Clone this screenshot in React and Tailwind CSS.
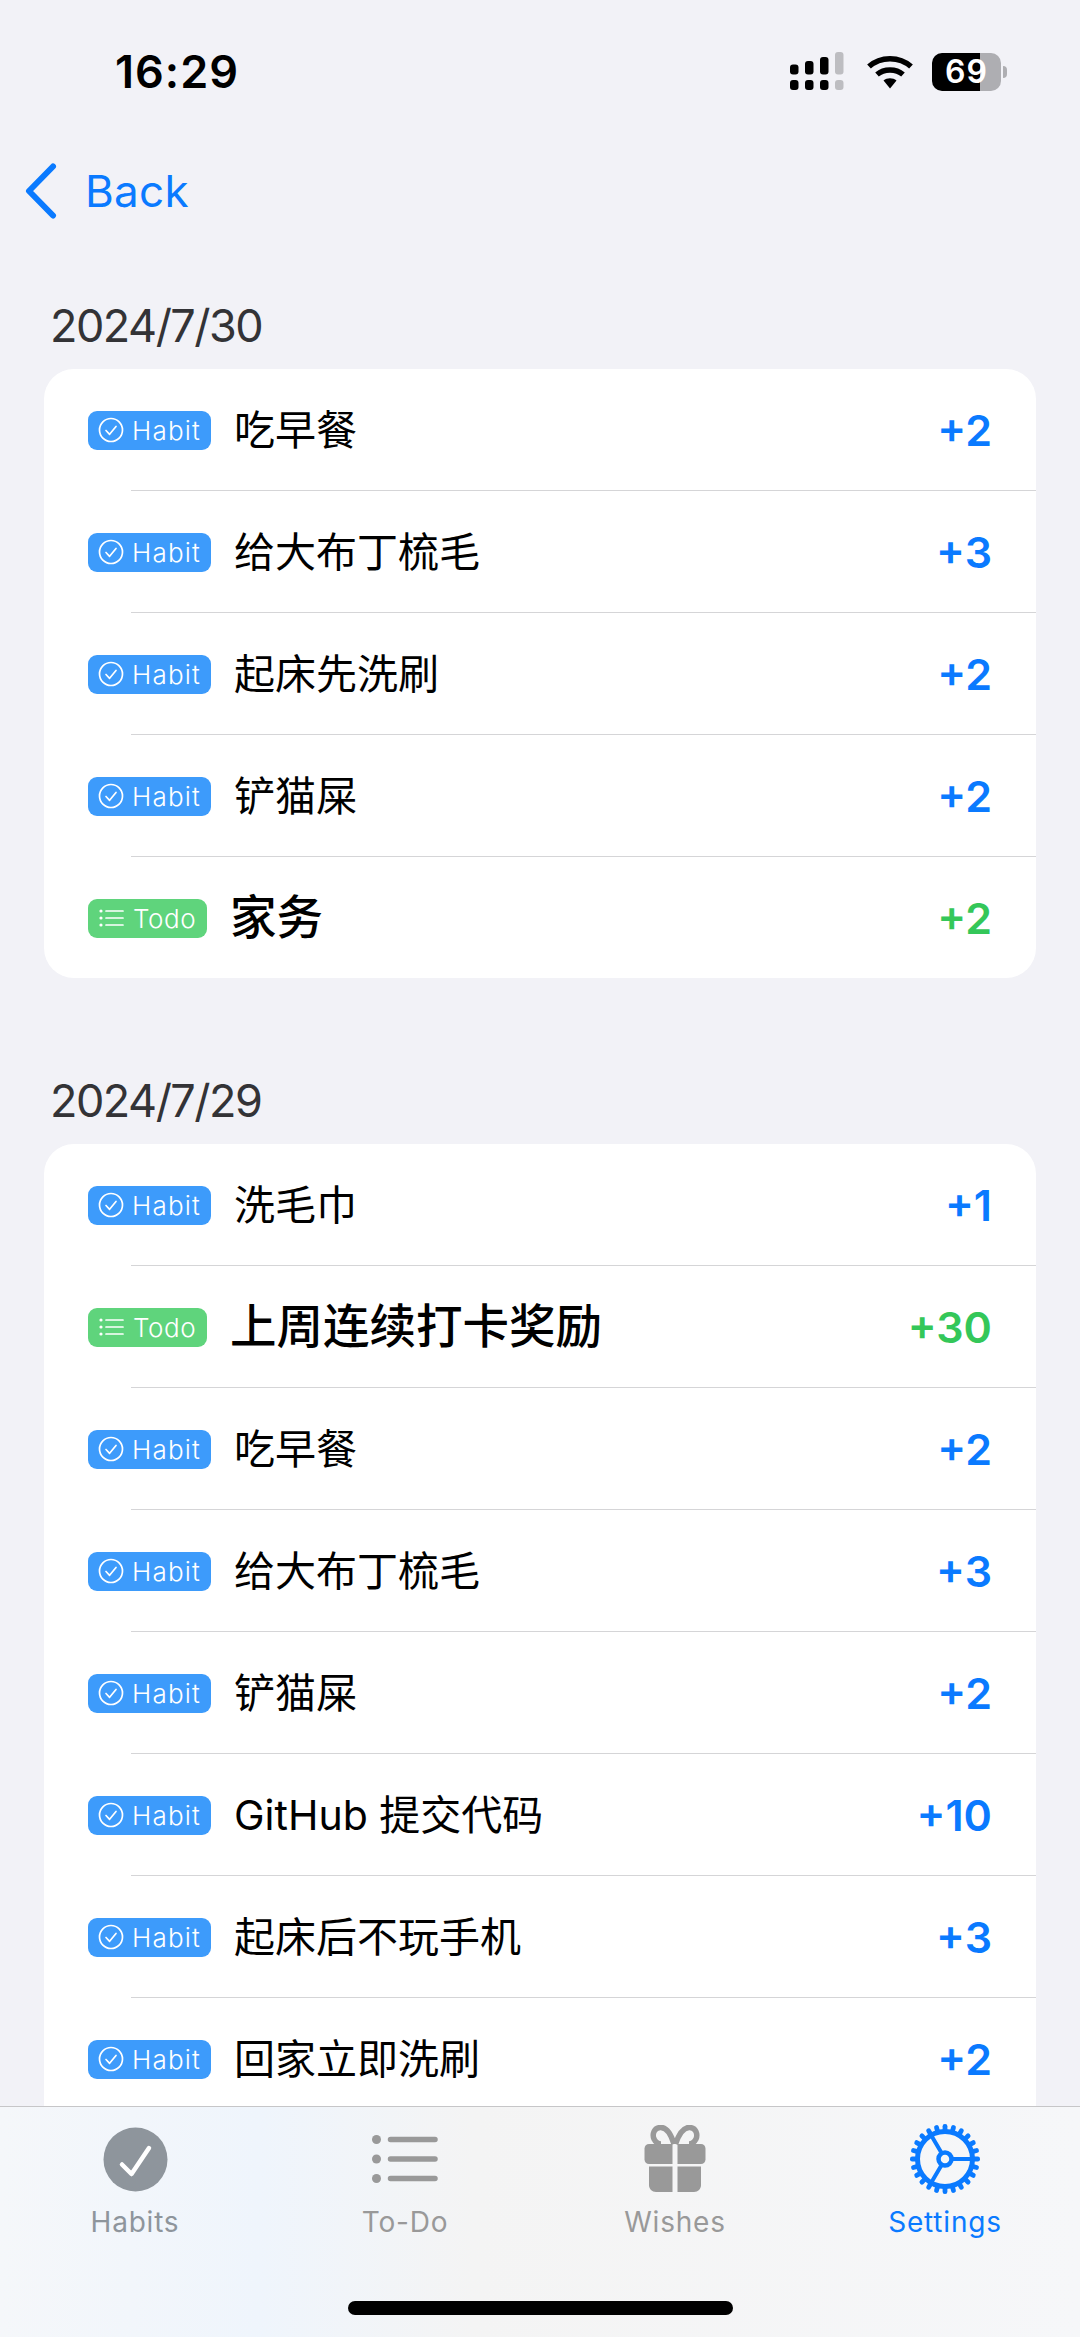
const CJK = "font-['Inter','Noto_Sans_CJK_SC',sans-serif]";

const firstDay = [
  { type: "habit", title: "吃早餐", points: 2 },
  { type: "habit", title: "给大布丁梳毛", points: 3 },
  { type: "habit", title: "起床先洗刷", points: 2 },
  { type: "habit", title: "铲猫屎", points: 2 },
  { type: "todo", title: "家务", points: 2 },
];

const secondDay = [
  { type: "habit", title: "洗毛巾", points: 1 },
  { type: "todo", title: "上周连续打卡奖励", points: 30 },
  { type: "habit", title: "吃早餐", points: 2 },
  { type: "habit", title: "给大布丁梳毛", points: 3 },
  { type: "habit", title: "铲猫屎", points: 2 },
  { type: "habit", title: "GitHub 提交代码", points: 10 },
  { type: "habit", title: "起床后不玩手机", points: 3 },
  { type: "habit", title: "回家立即洗刷", points: 2 },
  { type: "habit", title: "看书", points: 2 },
];

function SignalIcon() {
  return (
    <svg width="56" height="40" viewBox="0 0 56 40" className="block">
      <rect x="0" y="12.5" width="8.5" height="10" rx="3" fill="#000" />
      <rect x="15" y="9" width="8.5" height="13.5" rx="3" fill="#000" />
      <rect x="30" y="5" width="8.5" height="17.5" rx="3" fill="#000" />
      <rect x="45" y="0" width="8.5" height="22.5" rx="3" fill="#bdbdc1" />
      <rect x="0" y="28" width="8.5" height="10" rx="3" fill="#000" />
      <rect x="15" y="28" width="8.5" height="10" rx="3" fill="#000" />
      <rect x="30" y="28" width="8.5" height="10" rx="3" fill="#000" />
      <rect x="45" y="28" width="8.5" height="10" rx="3" fill="#bdbdc1" />
    </svg>
  );
}

function WifiIcon() {
  return (
    <svg width="46" height="34" viewBox="0 0 46 34" className="block">
      <path d="M2 11.5C13.5 1 32.5 1 44 11.5" fill="none" stroke="#000" strokeWidth="5.5" strokeLinecap="butt" />
      <path d="M10 19.5C17 13.5 29 13.5 36 19.5" fill="none" stroke="#000" strokeWidth="5.5" strokeLinecap="butt" />
      <path d="M16.5 25.5C20 22.5 26 22.5 29.5 25.5L23 33.5Z" fill="#000" />
    </svg>
  );
}

function HabitMark() {
  return (
    <svg width="26" height="26" viewBox="0 0 26 26" className="block shrink-0">
      <circle cx="13" cy="13" r="11.5" fill="none" stroke="#fff" strokeWidth="1.7" />
      <path d="M8 13.5l3.6 3.8L18 9.5" fill="none" stroke="#fff" strokeWidth="1.7" strokeLinecap="round" strokeLinejoin="round" />
    </svg>
  );
}

function TodoMark() {
  return (
    <svg width="26" height="22" viewBox="0 0 26 22" className="block shrink-0">
      <circle cx="2" cy="4" r="1.6" fill="#fff" />
      <circle cx="2" cy="11" r="1.6" fill="#fff" />
      <circle cx="2" cy="18" r="1.6" fill="#fff" />
      <path d="M7 4h17M7 11h17M7 18h17" stroke="#fff" strokeWidth="1.7" strokeLinecap="round" />
    </svg>
  );
}

function Badge({ type }) {
  if (type === "todo") {
    return (
      <div className="flex h-[39px] w-[119px] shrink-0 items-center gap-[8px] rounded-[9px] bg-[#5fd47c] pl-[11px] text-[26px] font-light tracking-[0.6px] text-white">
        <TodoMark />
        <span>Todo</span>
      </div>
    );
  }
  return (
    <div className="flex h-[39px] w-[123px] shrink-0 items-center gap-[8px] rounded-[9px] bg-[#3d9bfb] pl-[10px] text-[26px] font-light tracking-[1.2px] text-white">
      <HabitMark />
      <span>Habit</span>
    </div>
  );
}

function Row({ item }) {
  const isTodo = item.type === "todo";
  return (
    <div className="flex h-[121px] items-center pl-[44px] pr-[44px] pt-[1px]">
      <Badge type={item.type} />
      {isTodo ? (
        <span className="ml-[23px] text-[46.5px] font-medium text-black">{item.title}</span>
      ) : (
        <span className="ml-[23px] pt-[2px] text-[41px] text-black">{item.title}</span>
      )}
      {isTodo ? (
        <span className="ml-auto text-[43px] font-semibold text-[#34c759]">+{item.points}</span>
      ) : (
        <span className="ml-auto text-[43px] font-semibold text-[#0a7aff]">+{item.points}</span>
      )}
    </div>
  );
}

function Day({ date, items, className }) {
  return (
    <section className={className}>
      <h2 className="mb-[13px] ml-[50px] h-[60px] text-[45px] leading-[60px] font-normal tracking-[-1.5px] text-[#333336]">{date}</h2>
      <div className="mx-[44px] overflow-hidden rounded-[30px] bg-white">
        {items.map((item, i) => (
          <div key={i}>
            {i > 0 && <div className="ml-[87px] h-px bg-[#d5d5d7]" />}
            <Row item={item} />
          </div>
        ))}
      </div>
    </section>
  );
}

function GearIcon() {
  const teeth = Array.from({ length: 24 }, (_, i) => i * 15);
  return (
    <svg width="72" height="72" viewBox="-36 -36 72 72" className="block">
      {teeth.map((deg) => (
        <rect key={deg} x="-2.400" y="-35" width="4.800" height="8" rx="2.200" fill="#0a7aff" transform={`rotate(${deg})`} />
      ))}
      <circle r="27.5" fill="none" stroke="#0a7aff" strokeWidth="5" />
      <circle r="6.5" fill="none" stroke="#0a7aff" strokeWidth="4.5" />
      <path d="M8 0H27M-4 -7L-14 -24M-4 7L-14 24" stroke="#0a7aff" strokeWidth="4" />
    </svg>
  );
}

function GiftIcon() {
  return (
    <svg width="62" height="68" viewBox="0 0 62 68" className="block">
      <path d="M30 19C26 6 21 2 16 2.500C10 3 8 9 10 14C11.500 17 14 19 17 19M31.500 19C36 6 41 2 46 2.500C52 3 54 9 52 14C50.500 17 48 19 45 19" fill="none" stroke="#999" strokeWidth="5.500" />
      <path d="M5 19H28.500V39H5C2.500 39 0.500 37 0.500 34.500V23.500C0.500 21 2.500 19 5 19Z" fill="#999" />
      <path d="M33.500 19H57C59.500 19 61.500 21 61.500 23.500V34.500C61.500 37 59.500 39 57 39H33.500Z" fill="#999" />
      <path d="M5 41.500H28.500V67H12C8 67 5 64 5 60Z" fill="#999" />
      <path d="M33.500 41.500H57V60C57 64 54 67 50 67H33.500Z" fill="#999" />
    </svg>
  );
}

function Tab({ label, color, children }) {
  return (
    <div className="flex flex-col items-center">
      <div className="flex h-[72px] w-[72px] items-center justify-center">{children}</div>
      <span className={`mt-[10px] text-[28px] leading-[34px] tracking-[0.8px] ${color}`}>{label}</span>
    </div>
  );
}

export default function App() {
  return (
    <div className={`relative h-[2337px] w-[1080px] overflow-hidden bg-[#f2f2f7] ${CJK}`}>
      <div className="flex h-[144px] items-center justify-between pl-[115px] pr-[73px]">
        <span className="text-[45px] font-semibold tracking-[1px] text-black">16:29</span>
        <div className="flex items-center">
          <SignalIcon />
          <div className="ml-[21px]">
            <WifiIcon />
          </div>
          <div className="ml-[19px] flex h-[38px] w-[69px] items-center justify-center rounded-[10px] bg-[linear-gradient(90deg,#000_69%,#aeaeb2_69%)] text-[32px] font-semibold tracking-[1px] text-white">
            69
          </div>
          <div className="ml-[2px] h-[12px] w-[4px] rounded-r-full bg-[#aeaeb2]" />
        </div>
      </div>

      <div className="flex h-[94px] items-center">
        <svg width="34" height="56" viewBox="0 0 34 56" className="ml-[24px] block">
          <path d="M29 3.500L5 28L29 52.500" fill="none" stroke="#0a7aff" strokeWidth="6" strokeLinecap="round" strokeLinejoin="round" />
        </svg>
        <span className="ml-[27px] text-[44px] tracking-[0.3px] text-[#0a7aff]">Back</span>
      </div>

      <Day date="2024/7/30" items={firstDay} className="mt-[58px]" />
      <Day date="2024/7/29" items={secondDay} className="mt-[93px]" />

      <div className="absolute inset-x-0 bottom-0 h-[231px] border-t border-[#c6c6c8] bg-[linear-gradient(90deg,#f5f7fa_0%,#eff5fc_24%,#f4f4f4_44%,#f6f7f9_100%)]">
        <div className="grid grid-cols-4 pt-[16px]">
          <Tab label="Habits" color="text-[#8e959c]">
            <svg width="65" height="65" viewBox="0 0 65 65" className="block">
              <circle cx="32.500" cy="32.500" r="32" fill="#8e959c" />
              <path d="M19 37.500L28.500 47L46 21" fill="none" stroke="#fff" strokeWidth="4.500" strokeLinecap="round" strokeLinejoin="round" />
            </svg>
          </Tab>
          <Tab label="To-Do" color="text-[#999999]">
            <svg width="66" height="52" viewBox="0 0 66 52" className="block">
              <circle cx="4.500" cy="6.500" r="4.500" fill="#999" />
              <circle cx="4.500" cy="26" r="4.500" fill="#999" />
              <circle cx="4.500" cy="45.500" r="4.500" fill="#999" />
              <path d="M18.500 6.500H63M18.500 26H63M18.500 45.500H63" stroke="#999" strokeWidth="5.500" strokeLinecap="round" />
            </svg>
          </Tab>
          <Tab label="Wishes" color="text-[#999999]">
            <GiftIcon />
          </Tab>
          <Tab label="Settings" color="text-[#0a7aff]">
            <GearIcon />
          </Tab>
        </div>
        <div className="absolute bottom-[22px] left-[348px] h-[14px] w-[385px] rounded-full bg-black" />
      </div>
    </div>
  );
}
